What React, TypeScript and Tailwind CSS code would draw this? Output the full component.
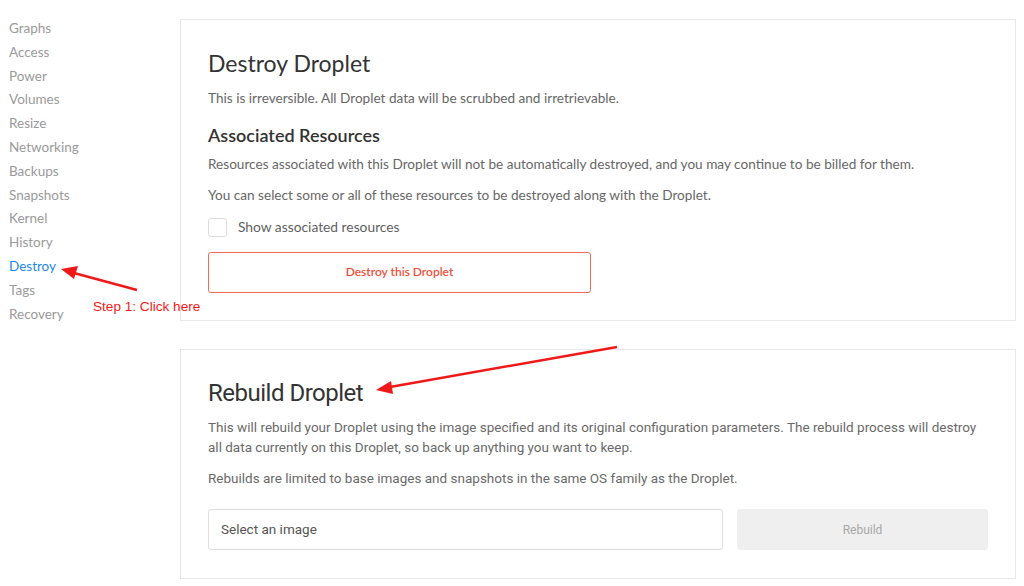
import React from "react";

const navItems = [
  "Graphs",
  "Access",
  "Power",
  "Volumes",
  "Resize",
  "Networking",
  "Backups",
  "Snapshots",
  "Kernel",
  "History",
  "Destroy",
  "Tags",
  "Recovery",
];

const Sidebar: React.FC = () => (
  <div className="w-[180px] shrink-0 pl-[9px] pt-[17px]">
    {navItems.map((item) => (
      <div
        key={item}
        className={
          item === "Destroy"
            ? "h-[23.8px] leading-[23.8px] text-[13.5px] text-[#1e88e5]"
            : "h-[23.8px] leading-[23.8px] text-[13.5px] text-[#9a9a9a]"
        }
      >
        {item}
      </div>
    ))}
  </div>
);

const DestroyCard: React.FC = () => (
  <div className="h-[302px] border border-[#e8e8e8] bg-white px-[27px] pt-[29px]">
    <h2 className="text-[23px] leading-[28px] text-[#333]">Destroy Droplet</h2>
    <p className="mt-[13px] text-[13.6px] leading-[16px] text-[#676767]">
      This is irreversible. All Droplet data will be scrubbed and irretrievable.
    </p>
    <h3 className="mt-[18px] text-[18px] font-semibold leading-[22px] text-[#333]">
      Associated Resources
    </h3>
    <p className="mt-[10px] text-[13.6px] leading-[16px] text-[#676767]">
      Resources associated with this Droplet will not be automatically destroyed, and you may continue
      to be billed for them.
    </p>
    <p className="mt-[15px] text-[13.6px] leading-[16px] text-[#676767]">
      You can select some or all of these resources to be destroyed along with the Droplet.
    </p>
    <label className="mt-[14px] flex items-center gap-[11px]">
      <span className="h-[19px] w-[19px] rounded-[3px] border border-[#dcdcdc] bg-white" />
      <span className="text-[13.8px] text-[#5f5f5f]">Show associated resources</span>
    </label>
    <button className="mt-[14px] flex h-[41px] w-[383px] items-center justify-center rounded-[3px] border border-[#f26b57] bg-white text-[12px] font-semibold text-[#f0513b]">
      Destroy this Droplet
    </button>
  </div>
);

const RebuildCard: React.FC = () => (
  <div
    className="mt-[28px] h-[230px] border border-[#e8e8e8] bg-white px-[27px] pt-[29px]"
    style={{ fontFamily: "Roboto, sans-serif" }}
  >
    <h2 className="text-[24px] leading-[28px] tracking-[-0.5px] text-[#333]">Rebuild Droplet</h2>
    <p className="mt-[10px] text-[13.5px] leading-[20px] text-[#6a6a6a]">
      This will rebuild your Droplet using the image specified and its original configuration
      parameters. The rebuild process will destroy all data currently on this Droplet, so back up
      anything you want to keep.
    </p>
    <p className="mt-[11px] text-[13.5px] leading-[20px] text-[#6a6a6a]">
      Rebuilds are limited to base images and snapshots in the same OS family as the Droplet.
    </p>
    <div className="mt-[21px] flex gap-[14px]">
      <div className="flex h-[41px] w-[515px] items-center rounded-[3px] border border-[#dedede] px-[12px] text-[13.5px] text-[#555]">
        Select an image
      </div>
      <button className="flex h-[41px] w-[251px] items-center justify-center rounded-[3px] bg-[#efefef] text-[12px] text-[#a8a8a8]">
        Rebuild
      </button>
    </div>
  </div>
);

export default function App() {
  return (
    <div
      className="relative h-[586px] w-[1024px] overflow-hidden bg-white"
      style={{ fontFamily: "Lato, 'Open Sans', sans-serif" }}
    >
      <div className="flex">
        <Sidebar />
        <div className="w-[836px] pt-[19px]">
          <DestroyCard />
          <RebuildCard />
        </div>
      </div>

      {/* annotations */}
      <svg className="pointer-events-none absolute left-0 top-0" width="1024" height="586">
        <line x1="137" y1="290" x2="74" y2="273" stroke="#f01919" strokeWidth="2.5" />
        <polygon points="61,269 78,266 74,279" fill="#f01919" />
        <line x1="617" y1="347" x2="390" y2="387" stroke="#f01919" strokeWidth="2.5" />
        <polygon points="376,390 391,381 393,394" fill="#f01919" />
      </svg>
      <div
        className="absolute left-[93px] top-[297px] text-[13.6px] text-[#f01919]"
        style={{ fontFamily: "'Liberation Sans', Arial, sans-serif" }}
      >
        Step 1: Click here
      </div>
    </div>
  );
}
